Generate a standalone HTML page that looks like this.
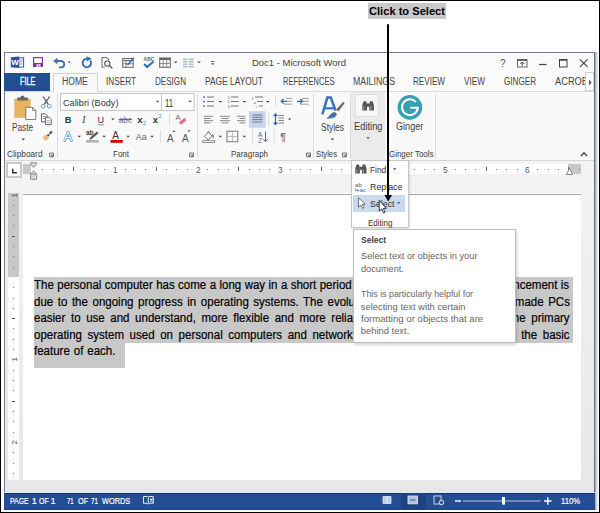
<!DOCTYPE html>
<html><head><meta charset="utf-8"><style>
*{margin:0;padding:0;box-sizing:border-box}
html,body{width:600px;height:513px;overflow:hidden;background:#fff;position:relative;font-family:'Liberation Sans',sans-serif}
.a{position:absolute}
.t{position:absolute;white-space:pre;font-family:'Liberation Sans',sans-serif;line-height:normal;transform-origin:0 0;z-index:5}
.frame{left:0;top:0;width:600px;height:513px;border:1px solid #000;z-index:20;pointer-events:none}
.win{left:4px;top:52px;width:591px;height:458px;background:#fafafa;border:1px solid #6f7f96;border-right:1px solid #5f7190}
.wr{left:595px;top:52px;width:3px;height:458px;background:linear-gradient(90deg,#97a4b8,#cfd5de 50%,#eef0f3)}
.docbg{left:5px;top:161px;width:589px;height:332px;background:linear-gradient(#f4f4f4,#f1f1f1 15%,#e7e7e7 100%)}
.ribbon{left:5px;top:91px;width:589px;height:70px;background:#f9f9f9;border-top:1px solid #dadada;border-bottom:1px solid #d6d6d6}
.filetab{left:4px;top:73px;width:46px;height:18px;background:#22508f}
.hometab{left:53px;top:73px;width:45px;height:19px;background:#f9f9f9;border:1px solid #d4d4d4;border-bottom:none;z-index:2}
.sep{width:1px;background:#dcdcdc}
.status{left:4px;top:493px;width:591px;height:17px;background:#234e93;border-top:1px solid #15356b;border-bottom:1px solid #1f4584;box-shadow:0 -1px 0 #dfe7f3}
.page{left:23px;top:194px;width:558px;height:286px;background:#fff;border-top:1px solid #a8a8a8;box-shadow:0 -1px 0 #fff}
.vr{left:8px;top:193px;width:11px;height:287px;background:#fff}
.vrg{left:8px;top:193px;width:11px;height:84px;background:#c8c8c8}
.hr{left:23px;top:164px;width:558px;height:10px;background:#fff}
.hrg{top:164px;height:10px;background:#c8c8c8}
.doc{left:34px;top:277px;width:539px;z-index:1;font-family:'Liberation Sans',sans-serif;color:#1b1b1b}
.ln{position:absolute;left:0;height:16.3px;background:#c8c8c8;white-space:nowrap}
.dd{left:351px;top:160px;width:58px;height:68px;background:#fff;border:1px solid #c6c6c6;z-index:3;box-shadow:1px 1px 2px rgba(0,0,0,.12)}
.tip{left:353px;top:229px;width:163px;height:114px;background:#fff;border:1px solid #bdbdbd;z-index:3;box-shadow:1px 2px 3px rgba(0,0,0,.18)}
.arrow{z-index:10}

.dw{position:absolute;white-space:pre;font-size:12.5px;line-height:normal;color:#000;-webkit-text-stroke:0.2px #000;transform:scaleX(0.92);transform-origin:0 0;z-index:2}

</style></head><body>
<div class="a frame"></div>
<div class="a" style="left:368px;top:3px;width:78px;height:16px;background:#c9c9c9"></div>
<div class="a win"></div><div class="a wr"></div>
<div class="a docbg"></div>
<div class="a ribbon"></div>
<div class="a filetab"></div>
<div class="a hometab"></div>
<!-- ribbon separators -->
<div class="a sep" style="left:57px;top:94px;height:64px"></div>
<div class="a sep" style="left:197px;top:94px;height:64px"></div>
<div class="a sep" style="left:313px;top:94px;height:64px"></div>
<div class="a sep" style="left:350px;top:94px;height:64px"></div>
<div class="a sep" style="left:435px;top:94px;height:64px"></div>
<!-- editing group pressed -->
<div class="a" style="left:351px;top:92px;width:34px;height:68px;background:#ebebeb"></div>
<div class="a" style="left:355px;top:94px;width:24px;height:23px;background:#f7f7f7;border:1px solid #dedede"></div>
<!-- ruler -->
<div class="a" style="left:6px;top:161.5px;width:16px;height:16.2px;background:#fff;border:2px solid #c9c9c9"></div>
<div class="a hr"></div>
<div class="a hrg" style="left:23px;width:8px"></div>
<div class="a hrg" style="left:568px;width:13px"></div>
<div class="a vr"></div>
<div class="a vrg"></div>
<div class="a page"></div>
<div class="a status"></div>
<div class="a status" style="left:401px;width:25px;background:#1e4382;border:none;height:16px"></div>
<div class="a dd">
  <div class="a" style="left:1px;top:34px;width:52px;height:17px;background:#c9d9ee"></div>
</div>
<div class="a tip"></div>
<div class='a' style='left:42.31px;top:169px;width:1px;height:1px;background:#777'></div><div class='a' style='left:52.62px;top:169px;width:1px;height:1px;background:#777'></div><div class='a' style='left:62.94px;top:169px;width:1px;height:1px;background:#777'></div><div class='a' style='left:73.25px;top:167px;width:1px;height:4px;background:#666'></div><div class='a' style='left:83.56px;top:169px;width:1px;height:1px;background:#777'></div><div class='a' style='left:93.88px;top:169px;width:1px;height:1px;background:#777'></div><div class='a' style='left:104.19px;top:169px;width:1px;height:1px;background:#777'></div><div class='a' style='left:124.81px;top:169px;width:1px;height:1px;background:#777'></div><div class='a' style='left:135.12px;top:169px;width:1px;height:1px;background:#777'></div><div class='a' style='left:145.44px;top:169px;width:1px;height:1px;background:#777'></div><div class='a' style='left:155.75px;top:167px;width:1px;height:4px;background:#666'></div><div class='a' style='left:166.06px;top:169px;width:1px;height:1px;background:#777'></div><div class='a' style='left:176.38px;top:169px;width:1px;height:1px;background:#777'></div><div class='a' style='left:186.69px;top:169px;width:1px;height:1px;background:#777'></div><div class='a' style='left:207.31px;top:169px;width:1px;height:1px;background:#777'></div><div class='a' style='left:217.62px;top:169px;width:1px;height:1px;background:#777'></div><div class='a' style='left:227.94px;top:169px;width:1px;height:1px;background:#777'></div><div class='a' style='left:238.25px;top:167px;width:1px;height:4px;background:#666'></div><div class='a' style='left:248.56px;top:169px;width:1px;height:1px;background:#777'></div><div class='a' style='left:258.88px;top:169px;width:1px;height:1px;background:#777'></div><div class='a' style='left:269.19px;top:169px;width:1px;height:1px;background:#777'></div><div class='a' style='left:289.81px;top:169px;width:1px;height:1px;background:#777'></div><div class='a' style='left:300.12px;top:169px;width:1px;height:1px;background:#777'></div><div class='a' style='left:310.44px;top:169px;width:1px;height:1px;background:#777'></div><div class='a' style='left:320.75px;top:167px;width:1px;height:4px;background:#666'></div><div class='a' style='left:331.06px;top:169px;width:1px;height:1px;background:#777'></div><div class='a' style='left:341.38px;top:169px;width:1px;height:1px;background:#777'></div><div class='a' style='left:351.69px;top:169px;width:1px;height:1px;background:#777'></div><div class='a' style='left:372.31px;top:169px;width:1px;height:1px;background:#777'></div><div class='a' style='left:382.62px;top:169px;width:1px;height:1px;background:#777'></div><div class='a' style='left:392.94px;top:169px;width:1px;height:1px;background:#777'></div><div class='a' style='left:403.25px;top:167px;width:1px;height:4px;background:#666'></div><div class='a' style='left:413.56px;top:169px;width:1px;height:1px;background:#777'></div><div class='a' style='left:423.88px;top:169px;width:1px;height:1px;background:#777'></div><div class='a' style='left:434.19px;top:169px;width:1px;height:1px;background:#777'></div><div class='a' style='left:454.81px;top:169px;width:1px;height:1px;background:#777'></div><div class='a' style='left:465.12px;top:169px;width:1px;height:1px;background:#777'></div><div class='a' style='left:475.44px;top:169px;width:1px;height:1px;background:#777'></div><div class='a' style='left:485.75px;top:167px;width:1px;height:4px;background:#666'></div><div class='a' style='left:496.06px;top:169px;width:1px;height:1px;background:#777'></div><div class='a' style='left:506.38px;top:169px;width:1px;height:1px;background:#777'></div><div class='a' style='left:516.69px;top:169px;width:1px;height:1px;background:#777'></div><div class='a' style='left:537.31px;top:169px;width:1px;height:1px;background:#777'></div><div class='a' style='left:547.62px;top:169px;width:1px;height:1px;background:#777'></div><div class='a' style='left:557.94px;top:169px;width:1px;height:1px;background:#777'></div><div class='a' style='left:568.25px;top:167px;width:1px;height:4px;background:#666'></div><div class='a' style='left:578.56px;top:169px;width:1px;height:1px;background:#777'></div><div class='a' style='left:13px;top:204.71px;width:1px;height:1px;background:#777'></div><div class='a' style='left:13px;top:215.02px;width:1px;height:1px;background:#777'></div><div class='a' style='left:13px;top:225.34px;width:1px;height:1px;background:#777'></div><div class='a' style='left:12px;top:235.65px;width:3px;height:1px;background:#555'></div><div class='a' style='left:13px;top:245.96px;width:1px;height:1px;background:#777'></div><div class='a' style='left:13px;top:256.27px;width:1px;height:1px;background:#777'></div><div class='a' style='left:13px;top:266.59px;width:1px;height:1px;background:#777'></div><div class='a' style='left:13px;top:287.21px;width:1px;height:1px;background:#777'></div><div class='a' style='left:13px;top:297.52px;width:1px;height:1px;background:#777'></div><div class='a' style='left:13px;top:307.84px;width:1px;height:1px;background:#777'></div><div class='a' style='left:12px;top:318.15px;width:3px;height:1px;background:#555'></div><div class='a' style='left:13px;top:328.46px;width:1px;height:1px;background:#777'></div><div class='a' style='left:13px;top:338.77px;width:1px;height:1px;background:#777'></div><div class='a' style='left:13px;top:349.09px;width:1px;height:1px;background:#777'></div><div class='a' style='left:13px;top:369.71px;width:1px;height:1px;background:#777'></div><div class='a' style='left:13px;top:380.02px;width:1px;height:1px;background:#777'></div><div class='a' style='left:13px;top:390.34px;width:1px;height:1px;background:#777'></div><div class='a' style='left:12px;top:400.65px;width:3px;height:1px;background:#555'></div><div class='a' style='left:13px;top:410.96px;width:1px;height:1px;background:#777'></div><div class='a' style='left:13px;top:421.27px;width:1px;height:1px;background:#777'></div><div class='a' style='left:13px;top:431.59px;width:1px;height:1px;background:#777'></div><div class='a' style='left:13px;top:452.21px;width:1px;height:1px;background:#777'></div><div class='a' style='left:13px;top:462.52px;width:1px;height:1px;background:#777'></div><div class='a' style='left:13px;top:472.84px;width:1px;height:1px;background:#777'></div>
<div class="a" style="left:34px;top:277px;width:539px;height:65.5px;background:#c8c8c8;z-index:1"></div>
<div class="a" style="left:34px;top:342.5px;width:91px;height:25px;background:#c8c8c8;z-index:1"></div>
<span class='dw' style='left:34.20px;top:278.19px;word-spacing:0.25px'>The personal computer has come a long way in a short period of time. A large part of</span><span class='dw' style='left:467.39px;top:278.19px;word-spacing:0.25px'>this advancement is</span><span class='dw' style='left:34.20px;top:294.69px;word-spacing:1.5px'>due to the ongoing progress in operating systems. The evolution of operating</span><span class='dw' style='left:444.57px;top:294.69px;word-spacing:1.5px'>systems has made PCs</span><span class='dw' style='left:34.20px;top:311.09px;word-spacing:2.63px'>easier to use and understand, more flexible and more reliable. This tutorial</span><span class='dw' style='left:461.89px;top:311.09px;word-spacing:2.63px'>looks at the primary</span><span class='dw' style='left:34.20px;top:327.79px;word-spacing:2.64px'>operating system used on personal computers and networks, and</span><span class='dw' style='left:429.89px;top:327.79px;word-spacing:2.64px'>briefly examines the basic</span><span class='dw' style='left:34.20px;top:344.49px;word-spacing:0.8px'>feature of each.</span>
<svg class="a" style="left:0;top:0;z-index:4" width="600" height="513" font-family="Liberation Sans">
<!-- ===== title bar quick access ===== -->
<!-- word icon -->
<rect x="18" y="57.8" width="5.6" height="9.2" fill="#fff" stroke="#2b579a" stroke-width="1"/>
<line x1="19" y1="60" x2="22.6" y2="60" stroke="#7d9cc8" stroke-width=".9"/><line x1="19" y1="62" x2="22.6" y2="62" stroke="#7d9cc8" stroke-width=".9"/><line x1="19" y1="64" x2="22.6" y2="64" stroke="#7d9cc8" stroke-width=".9"/>
<polygon points="10.8,57.3 19.2,56.5 19.2,68 10.8,67.2" fill="#2b579a"/>
<text x="11.3" y="65" font-size="7.2" font-weight="700" fill="#fff" textLength="7.6" lengthAdjust="spacingAndGlyphs">W</text>
<!-- save -->
<rect x="33" y="57" width="10" height="10" fill="#80379c"/>
<rect x="34.2" y="58.2" width="7.6" height="4.8" fill="#fff"/>
<rect x="36.6" y="64.3" width="3.8" height="2.7" fill="#fff"/>
<rect x="37.8" y="65" width="1.4" height="1.6" fill="#80379c"/>
<!-- undo -->
<path d="M55.5 61 H61 A3.2 3.2 0 0 1 61 67.4 H59" fill="none" stroke="#3a6fb5" stroke-width="1.8"/>
<polygon points="53.2,61 57.5,57.7 57.5,64.3" fill="#3a6fb5"/>
<polygon points="67.5,61.5 71,61.5 69.25,63.3" fill="#555"/>
<!-- redo circular -->
<path d="M90.3 60.6 A4.2 4.2 0 1 1 86.8 58.8" fill="none" stroke="#2f6db5" stroke-width="1.9"/>
<polygon points="86.6,56.3 91.8,58.8 86.6,61.4" fill="#2f6db5"/>
<!-- print preview -->
<path d="M108.8 60.5 V59.8 L106.5 57.5 H102 V67.3 H104.8" fill="none" stroke="#777" stroke-width="1.1"/>
<circle cx="107.3" cy="63.6" r="2.6" fill="none" stroke="#555" stroke-width="1.1"/>
<line x1="109.2" y1="65.5" x2="112.3" y2="68.3" stroke="#555" stroke-width="1.3"/>
<!-- track/edit -->
<rect x="122.7" y="58.5" width="10.5" height="8.8" fill="none" stroke="#666" stroke-width="1"/>
<line x1="122.7" y1="60.5" x2="133.2" y2="60.5" stroke="#666"/><line x1="126" y1="60.5" x2="126" y2="67.3" stroke="#666" stroke-width=".8"/><line x1="122.7" y1="63.8" x2="133.2" y2="63.8" stroke="#666" stroke-width=".8"/>
<line x1="127.5" y1="65" x2="133.8" y2="57.8" stroke="#3a74b8" stroke-width="1.8"/>
<!-- ABC check -->
<text x="143.6" y="61.3" font-size="5" font-weight="700" fill="#666">ABC</text>
<path d="M144.2 63.8 L147 67 L153.5 61.5" fill="none" stroke="#2f6db5" stroke-width="2"/>
<!-- table -->
<rect x="159.7" y="58" width="10.6" height="9.3" fill="none" stroke="#666" stroke-width="1"/>
<rect x="159.7" y="58" width="10.6" height="2" fill="#666"/>
<line x1="163.2" y1="60" x2="163.2" y2="67.3" stroke="#777" stroke-width=".8"/><line x1="166.7" y1="60" x2="166.7" y2="67.3" stroke="#777" stroke-width=".8"/><line x1="159.7" y1="63.5" x2="170.3" y2="63.5" stroke="#777" stroke-width=".8"/>
<polygon points="174,61.5 177.5,61.5 175.75,63.3" fill="#444"/>
<!-- columns -->
<g fill="#9fb3cf"><rect x="183" y="58.5" width="4.6" height="1.3"/><rect x="189" y="58.5" width="4.6" height="1.3"/><rect x="183" y="61" width="4.6" height="1.3"/><rect x="189" y="61" width="4.6" height="1.3"/><rect x="183" y="63.5" width="4.6" height="1.3"/><rect x="189" y="63.5" width="4.6" height="1.3"/><rect x="183" y="66" width="4.6" height="1.3"/><rect x="189" y="66" width="4.6" height="1.3"/></g>
<polygon points="197.3,61.5 200.8,61.5 199,63.3" fill="#444"/>
<!-- customize -->
<rect x="211" y="61" width="3.5" height="0.9" fill="#555"/><polygon points="211,63.2 214.5,63.2 212.75,65" fill="#555"/>
<!-- window controls -->
<text x="500" y="67" font-size="10" fill="#555">?</text>
<rect x="517.5" y="59.5" width="9.5" height="7.5" fill="none" stroke="#666" stroke-width="1"/>
<rect x="517.5" y="59.5" width="9.5" height="1.5" fill="#666"/>
<path d="M522.2 66 V62 M520.2 64 L522.2 62 L524.2 64" fill="none" stroke="#555" stroke-width="1"/>
<line x1="539" y1="64.5" x2="546.5" y2="64.5" stroke="#444" stroke-width="1.2"/>
<rect x="559.5" y="59.5" width="7.5" height="7.5" fill="none" stroke="#444" stroke-width="1"/>
<line x1="559.5" y1="60.2" x2="567" y2="60.2" stroke="#444" stroke-width="1"/>
<path d="M580 59.3 L587.6 66.9 M587.6 59.3 L580 66.9" stroke="#444" stroke-width="1.2"/>
<!-- ===== Clipboard group ===== -->
<rect x="14.3" y="98.8" width="16.3" height="19" fill="#e8b35e"/>
<path d="M17.3 97.5 H20.5 A2 2 0 0 1 24.5 97.5 H27.8 V100.6 H17.3 Z" fill="#666"/>
<path d="M25.8 107.3 H32.5 L35.8 110.6 V119.4 H25.8 Z" fill="#fff" stroke="#777" stroke-width="1"/>
<path d="M32.5 107.3 V110.6 H35.8" fill="none" stroke="#777" stroke-width=".8"/>
<polygon points="21.5,138.6 25,138.6 23.25,140.4" fill="#444"/>
<!-- scissors -->
<path d="M43 96.5 L48.3 104.3 M49.6 96.5 L44.3 104.3" stroke="#555" stroke-width="1.2"/>
<circle cx="43.3" cy="106.2" r="1.9" fill="none" stroke="#7094c2" stroke-width="1"/>
<circle cx="49.3" cy="106.2" r="1.9" fill="none" stroke="#7094c2" stroke-width="1"/>
<!-- copy -->
<path d="M41.5 113.8 H45.5 L47.2 115.5 V121.8 H41.5 Z" fill="#fff" stroke="#666" stroke-width="1"/>
<line x1="42.8" y1="116.5" x2="45.5" y2="116.5" stroke="#777" stroke-width=".8"/><line x1="42.8" y1="118.5" x2="45.5" y2="118.5" stroke="#777" stroke-width=".8"/>
<path d="M45.4 117.3 H49.3 L51.3 119.3 V124.6 H45.4 Z" fill="#fff" stroke="#666" stroke-width="1"/>
<line x1="46.6" y1="120.6" x2="50.1" y2="120.6" stroke="#8aa0bd" stroke-width=".8"/><line x1="46.6" y1="122.5" x2="50.1" y2="122.5" stroke="#8aa0bd" stroke-width=".8"/>
<!-- format painter -->
<polygon points="42.3,137.6 45.8,134.2 49.3,137.7 45.8,141" fill="#e6bd78"/>
<line x1="47.5" y1="135.8" x2="49" y2="134.4" stroke="#444" stroke-width="2"/>
<line x1="49.6" y1="133.8" x2="52" y2="131.6" stroke="#444" stroke-width="2"/>

<!-- ===== Font group ===== -->
<rect x="60.5" y="93.5" width="101" height="17" fill="#fff" stroke="#c6c6c6" stroke-width="1"/>
<rect x="161.5" y="93.5" width="32.5" height="17" fill="#fff" stroke="#c6c6c6" stroke-width="1"/>
<polygon points="155.8,100.8 159.3,100.8 157.55,102.6" fill="#444"/>
<polygon points="188.3,100.8 191.8,100.8 190.05,102.6" fill="#444"/>
<text x="64.8" y="122.8" font-size="9.3" font-weight="700" fill="#333">B</text>
<text x="82.3" y="122.8" font-size="9.5" font-style="italic" font-family="Liberation Serif" fill="#333">I</text>
<text x="97.5" y="122.8" font-size="9" fill="#333">U</text>
<line x1="97.5" y1="124.8" x2="104" y2="124.8" stroke="#888" stroke-width=".9"/>
<polygon points="111.2,118.5 114.7,118.5 112.95,120.3" fill="#444"/>
<text x="118.8" y="122.6" font-size="8.2" fill="#777" textLength="13">abc</text>
<line x1="118.5" y1="119.6" x2="132" y2="119.6" stroke="#555" stroke-width=".9"/>
<text x="137.3" y="122.8" font-size="9.5" font-weight="700" fill="#333">x</text><text x="143" y="125" font-size="5.5" fill="#4a82c0">2</text>
<text x="152.8" y="122.8" font-size="9.5" font-weight="700" fill="#333">x</text><text x="158.6" y="117.5" font-size="5.5" fill="#4a82c0">2</text>
<line x1="169.5" y1="113" x2="169.5" y2="125" stroke="#dcdcdc"/>
<text x="175.5" y="119.5" font-size="7.5" fill="#666">A</text>
<line x1="180" y1="123.5" x2="185.5" y2="119" stroke="#e26d7f" stroke-width="3"/>
<!-- row 3 -->
<text x="64" y="141.3" font-size="12" fill="#fff" stroke="#5b93d0" stroke-width="1.4" stroke-linejoin="round">A</text><text x="64" y="141.3" font-size="12" fill="#fff">A</text>
<polygon points="77.5,135.8 81,135.8 79.25,137.6" fill="#444"/>
<text x="86" y="134.9" font-size="6.6" fill="#444" stroke="#444" stroke-width=".25">ab</text>
<line x1="91" y1="138.3" x2="97.6" y2="132.4" stroke="#555" stroke-width="2.2"/><polygon points="89.2,139.7 90.2,137.3 91.8,138.9" fill="#555"/>
<rect x="86" y="140" width="12.8" height="2.7" fill="#b5b5b5"/>
<polygon points="102.3,135.8 105.8,135.8 104.05,137.6" fill="#444"/>
<text x="112.2" y="138.8" font-size="10" fill="#333">A</text>
<rect x="110.5" y="140" width="12.3" height="2.8" fill="#e00000"/>
<polygon points="126.3,135.8 129.8,135.8 128.05,137.6" fill="#444"/>
<text x="135.8" y="140" font-size="9" fill="#666">Aa</text>
<polygon points="150.3,135.8 153.8,135.8 152.05,137.6" fill="#444"/>
<line x1="160.5" y1="130" x2="160.5" y2="143" stroke="#dcdcdc"/>
<text x="167" y="141.5" font-size="10" fill="#555">A</text><polygon points="172.5,132 175.5,132 174,130.3" fill="#444"/>
<text x="182" y="141.5" font-size="10" fill="#555">A</text><polygon points="187.5,130.3 190.5,130.3 189,132" fill="#444"/>
<!-- dialog launchers -->
<g fill="none" stroke="#666" stroke-width=".9"><path d="M49.5 156.8 V153 H53.5 V156.8 Z M50.7 154.2 L52.7 156.2 M52.7 154.6 V156.2 H51.1"/><path d="M189.5 156.8 V153 H193.5 V156.8 Z M190.7 154.2 L192.7 156.2 M192.7 154.6 V156.2 H191.1"/><path d="M306.5 156.8 V153 H310.5 V156.8 Z M307.7 154.2 L309.7 156.2 M309.7 154.6 V156.2 H308.1"/><path d="M342.5 156.8 V153 H346.5 V156.8 Z M343.7 154.2 L345.7 156.2 M345.7 154.6 V156.2 H344.1"/></g>

<!-- ===== Paragraph group ===== -->
<g fill="#3a6fb5"><rect x="203.3" y="96.3" width="1.6" height="1.6"/><rect x="203.3" y="100.8" width="1.6" height="1.6"/><rect x="203.3" y="105.2" width="1.6" height="1.6"/></g>
<g stroke="#777" stroke-width="1"><line x1="207" y1="97" x2="214" y2="97"/><line x1="207" y1="101.5" x2="214" y2="101.5"/><line x1="207" y1="106" x2="214" y2="106"/></g>
<polygon points="218.6,101 222.1,101 220.35,102.8" fill="#444"/>
<g fill="#3a6fb5" font-size="4.2"><text x="227.5" y="98.8">1</text><text x="227.5" y="103.3">2</text><text x="227.5" y="107.8">3</text></g>
<g stroke="#777" stroke-width="1"><line x1="231" y1="97" x2="238.5" y2="97"/><line x1="231" y1="101.5" x2="238.5" y2="101.5"/><line x1="231" y1="106" x2="238.5" y2="106"/></g>
<polygon points="242.6,101 246.1,101 244.35,102.8" fill="#444"/>
<g fill="#3a6fb5" font-size="4.2"><text x="251.5" y="99.5">1</text><text x="253.5" y="103.5">a</text></g><text x="256" y="107.5" font-size="4.2" fill="#777">i</text>
<g stroke="#777" stroke-width="1"><line x1="255" y1="97" x2="263" y2="97"/><line x1="257" y1="101.5" x2="263" y2="101.5"/><line x1="259" y1="106" x2="263" y2="106"/></g>
<polygon points="266,101 269.5,101 267.75,102.8" fill="#444"/>
<line x1="275.5" y1="95" x2="275.5" y2="107" stroke="#dcdcdc"/>
<g stroke="#aaa" stroke-width="1.2"><line x1="286" y1="98.5" x2="292.3" y2="98.5"/><line x1="286" y1="101.3" x2="292.3" y2="101.3"/><line x1="284" y1="104.2" x2="292.3" y2="104.2"/><line x1="302" y1="98.5" x2="308.8" y2="98.5"/><line x1="302" y1="101.3" x2="308.8" y2="101.3"/><line x1="300" y1="104.2" x2="308.8" y2="104.2"/></g>
<path d="M281.3 101.3 H287 M283.5 99 L281.3 101.3 L283.5 103.6" fill="none" stroke="#3a6fb5" stroke-width="1.3"/>
<path d="M297 101.3 H302.5 M300.2 99 L302.5 101.3 L300.2 103.6" fill="none" stroke="#3a6fb5" stroke-width="1.3"/>
<!-- align row -->
<g stroke="#777" stroke-width=".9">
<line x1="204" y1="116.3" x2="213" y2="116.3"/><line x1="204" y1="118.5" x2="210.5" y2="118.5"/><line x1="204" y1="120.7" x2="213" y2="120.7"/><line x1="204" y1="122.9" x2="210.5" y2="122.9"/>
<line x1="220" y1="116.3" x2="230" y2="116.3"/><line x1="221.5" y1="118.5" x2="228.5" y2="118.5"/><line x1="220" y1="120.7" x2="230" y2="120.7"/><line x1="221.5" y1="122.9" x2="228.5" y2="122.9"/>
<line x1="237" y1="116.3" x2="245.5" y2="116.3"/><line x1="239.5" y1="118.5" x2="245.5" y2="118.5"/><line x1="237" y1="120.7" x2="245.5" y2="120.7"/><line x1="239.5" y1="122.9" x2="245.5" y2="122.9"/>
</g>
<rect x="249" y="111.2" width="16.6" height="16.5" fill="#c5d6ec"/>
<g stroke="#6d7a8a" stroke-width="1"><line x1="252.3" y1="115" x2="262.4" y2="115"/><line x1="252.3" y1="117.3" x2="262.4" y2="117.3"/><line x1="252.3" y1="119.6" x2="262.4" y2="119.6"/><line x1="252.3" y1="122" x2="262.4" y2="122"/></g>
<line x1="268.5" y1="112" x2="268.5" y2="126" stroke="#dcdcdc"/>
<path d="M275.5 114 V124.5 M273.6 116 L275.5 114 L277.4 116 M273.6 122.5 L275.5 124.5 L277.4 122.5" fill="none" stroke="#3a6fb5" stroke-width="1.3"/>
<g stroke="#777" stroke-width=".9"><line x1="278.5" y1="115.5" x2="284" y2="115.5"/><line x1="278.5" y1="118" x2="284" y2="118"/><line x1="278.5" y1="120.5" x2="284" y2="120.5"/><line x1="278.5" y1="123" x2="284" y2="123"/></g>
<polygon points="287.8,118.5 291.3,118.5 289.55,120.3" fill="#444"/>
<!-- row3 -->
<path d="M204.3 136.3 L208.3 132.3 L212.1 136.1 L208.1 140 Z" fill="#fff" stroke="#6a6a6a" stroke-width=".9"/>
<path d="M207.4 133.2 C207 131 209.8 130.6 209.8 132.8 V134" fill="none" stroke="#777" stroke-width=".8"/>
<path d="M212.2 133.6 C214.4 135.2 214.2 137.6 212.8 138.8 C212.3 137 212.9 135.5 212.2 133.6 Z" fill="#2f6db5"/>
<rect x="202.7" y="140.7" width="12" height="1.9" fill="#fff" stroke="#777" stroke-width=".8"/>
<polygon points="218.6,135.8 222.1,135.8 220.35,137.6" fill="#444"/>
<rect x="227" y="131.2" width="10.8" height="10.5" fill="none" stroke="#777" stroke-width="1"/>
<line x1="232.4" y1="131.2" x2="232.4" y2="141.7" stroke="#aaa" stroke-width=".8"/><line x1="227" y1="136.45" x2="237.8" y2="136.45" stroke="#aaa" stroke-width=".8"/>
<polygon points="242.6,135.8 246.1,135.8 244.35,137.6" fill="#444"/>
<line x1="252.5" y1="129" x2="252.5" y2="143" stroke="#dcdcdc"/>
<text x="258" y="136.5" font-size="6.5" fill="#3a6fb5">A</text><text x="258.3" y="142.5" font-size="6.5" fill="#8e5ba8">Z</text>
<path d="M265.5 131.5 V141.5 M263.3 139.2 L265.5 141.5 L267.7 139.2" fill="none" stroke="#666" stroke-width="1"/>
<line x1="274.3" y1="129" x2="274.3" y2="143" stroke="#dcdcdc"/>
<text x="280.3" y="140.5" font-size="10" font-weight="700" fill="#777">¶</text>

<!-- ===== Styles group ===== -->
<path d="M322.3 114.3 L327.4 97.6 H330.8 L335.5 110.5" fill="none" stroke="#3a72b8" stroke-width="2.5" stroke-linejoin="miter"/>
<line x1="325" y1="108.3" x2="333.8" y2="108.3" stroke="#3a72b8" stroke-width="2.2"/>
<polygon points="343.2,101.8 344.6,103.3 338.4,111.6 336.2,109.6" fill="#6b6b6b"/>
<path d="M327 118.4 L331.6 113.6 C333.5 111.8 336.6 112.3 336.4 114.6 C336.2 117 333 118.3 327 118.4 Z" fill="#3a72b8" stroke="#777" stroke-width=".7"/>
<polygon points="330.6,138.6 334.1,138.6 332.35,140.4" fill="#444"/>

<!-- ===== Editing / Ginger ===== -->
<polygon points="362.31,110.39 362.31,105.29 363.63,101.21 366.28,101.21 367.00,105.29 367.00,110.39" fill="#555"/><polygon points="373.93,110.39 373.93,105.29 372.61,101.21 369.96,101.21 369.24,105.29 369.24,110.39" fill="#555"/><rect x="366.59" y="103.46" width="3.06" height="3.26" fill="#555"/><rect x="363.33" y="106.21" width="1.22" height="3.57" fill="#999"/><rect x="370.26" y="106.21" width="1.22" height="3.57" fill="#999"/>
<polygon points="366.3,137.2 369.8,137.2 368.05,139" fill="#444"/>
<circle cx="409.9" cy="107.4" r="12.3" fill="#35a0b1"/>
<path d="M415.8 101.9 A7.9 7.9 0 1 0 417.8 107.8 H410.2" fill="none" stroke="#fff" stroke-width="2"/>
<!-- collapse caret -->
<path d="M581 156 L584 152.8 L587 156" fill="none" stroke="#444" stroke-width="1.3"/>

<!-- ===== dropdown icons ===== -->
<polygon points="355.29,173.41 355.29,168.51 356.57,164.59 359.12,164.59 359.80,168.51 359.80,173.41" fill="#555"/><polygon points="366.47,173.41 366.47,168.51 365.19,164.59 362.64,164.59 361.96,168.51 361.96,173.41" fill="#555"/><rect x="359.41" y="166.74" width="2.94" height="3.14" fill="#555"/><rect x="356.27" y="169.39" width="1.18" height="3.43" fill="#999"/><rect x="362.94" y="169.39" width="1.18" height="3.43" fill="#999"/>
<polygon points="393,168.3 396.5,168.3 394.75,170.1" fill="#444"/>
<text x="355" y="186.5" font-size="6.2" fill="#555">ab</text>
<text x="359.5" y="192" font-size="6.2" fill="#3a6fb5">ac</text>
<path d="M355.5 188.5 V190.5 H358.8 M357.5 189.3 L358.8 190.5 L357.5 191.7" fill="none" stroke="#3a6fb5" stroke-width=".8"/>
<path d="M358.5 197.8 V207.2 L360.8 205 L362.6 208.3 L364 207.6 L362.3 204.4 H365.3 Z" fill="#fff" stroke="#666" stroke-width=".9"/>
<polygon points="397,202.3 400.5,202.3 398.75,204.1" fill="#444"/>
<!-- ===== ruler parts ===== -->
<path d="M12.8 168.8 V172.8 H16.9" fill="none" stroke="#333" stroke-width="1.5"/>
<polygon points="30.6,162.8 36.6,162.8 36.6,164 33.6,167.6 30.6,164" fill="#dadada" stroke="#888" stroke-width=".9" stroke-linejoin="round"/>
<polygon points="33.6,170.6 36.6,174.2 36.6,179.3 30.6,179.3 30.6,174.2" fill="#dadada" stroke="#888" stroke-width=".9" stroke-linejoin="round"/>
<line x1="30.6" y1="174.2" x2="36.6" y2="174.2" stroke="#888" stroke-width=".9"/>
<polygon points="569.5,168.2 566.3,174.5 572.7,174.5" fill="#fff" stroke="#777" stroke-width=".9"/>
<!-- vertical ruler "1" marks -->
<text x="0" y="0" font-size="8" fill="#444" transform="translate(17,197.6) rotate(-90)">1</text>
<text x="0" y="0" font-size="8" fill="#444" transform="translate(17,361.6) rotate(-90)">1</text>
<text x="0" y="0" font-size="8" fill="#444" transform="translate(17,444.6) rotate(-90)">2</text>

<!-- ===== status bar icons ===== -->
<path d="M143.5 496.5 H147.5 L148.3 497.2 L149.1 496.5 H153.3 V503.3 H149.1 L148.3 504 L147.5 503.3 H143.5 Z M148.3 497.2 V503.5" fill="none" stroke="#dfe8f6" stroke-width="1"/>
<path d="M150.2 498.6 L152.6 501.6 M152.6 498.6 L150.2 501.6" stroke="#fff" stroke-width="1.1"/>
<path d="M383 496.5 H387 V503.5 H383 Z M387 496.5 H391 V503.5 H387 Z" fill="#bcd0ec" stroke="#dfe8f5" stroke-width=".8"/>
<rect x="408" y="496" width="9.5" height="7.8" fill="#aec3e0" stroke="#e5ecf6" stroke-width=".8"/><line x1="410" y1="500" x2="415.5" y2="500" stroke="#3c5f96"/>
<rect x="434" y="496" width="7" height="8" fill="none" stroke="#dbe5f3" stroke-width=".9"/><circle cx="441.5" cy="502.5" r="2.2" fill="#2b579a" stroke="#fff" stroke-width=".9"/>
<line x1="455" y1="501" x2="461" y2="501" stroke="#fff" stroke-width="1.4"/>
<line x1="463" y1="501" x2="540.5" y2="501" stroke="#b9c9e2" stroke-width="1"/>
<rect x="502" y="497" width="3" height="7.6" fill="#fff"/>
<path d="M544 501 H551.5 M547.75 497.2 V504.8" stroke="#fff" stroke-width="1.5"/>
</svg>

<div class="a" style="left:585px;top:72px;width:9px;height:19px;background:#fff;border:1px solid #d0d0d0;z-index:6"><svg width="9" height="19" style="position:absolute;left:0;top:0"><polygon points="3,6.5 5.7,9.5 3,12.5" fill="#555"/></svg></div>
<svg class="a arrow" style="left:0;top:0" width="600" height="513"><line x1="388" y1="25" x2="388" y2="196" stroke="#000" stroke-width="2" stroke-linecap="round"/><polygon points="384.5,195 392,195 388.2,201.5" fill="#000"/><path d="M379.2 200.3 V211 L381.6 208.9 L383.5 213 L385 212.3 L383.2 208.4 H386.4 Z" fill="#fff" stroke="#222" stroke-width=".9" stroke-linejoin="round"/></svg>

<span id='t0' class='t' style='left:369.00px;top:5.04px;font-size:11px;font-weight:700;color:#000;transform:scaleX(1.0106);'>Click to Select</span><span id='t1' class='t' style='left:252.00px;top:57.43px;font-size:9.8px;font-weight:400;color:#444;transform:scaleX(0.9664);'>Doc1 - Microsoft Word</span><span id='t2' class='t' style='left:19.70px;top:76.15px;font-size:10.0px;font-weight:400;color:#fff;-webkit-text-stroke:.3px #fff;transform:scaleX(0.7337);'>FILE</span><span id='t3' class='t' style='left:61.70px;top:76.15px;font-size:10.0px;font-weight:400;color:#33486e;transform:scaleX(0.8600);'>HOME</span><span id='t4' class='t' style='left:106.00px;top:76.15px;font-size:10.0px;font-weight:400;color:#444;transform:scaleX(0.8219);'>INSERT</span><span id='t5' class='t' style='left:155.00px;top:76.15px;font-size:10.0px;font-weight:400;color:#444;transform:scaleX(0.8085);'>DESIGN</span><span id='t6' class='t' style='left:205.00px;top:76.15px;font-size:10.0px;font-weight:400;color:#444;transform:scaleX(0.8394);'>PAGE LAYOUT</span><span id='t7' class='t' style='left:282.50px;top:76.15px;font-size:10.0px;font-weight:400;color:#444;transform:scaleX(0.7534);'>REFERENCES</span><span id='t8' class='t' style='left:353.00px;top:76.15px;font-size:10.0px;font-weight:400;color:#444;transform:scaleX(0.8787);'>MAILINGS</span><span id='t9' class='t' style='left:413.00px;top:76.15px;font-size:10.0px;font-weight:400;color:#444;transform:scaleX(0.8111);'>REVIEW</span><span id='t10' class='t' style='left:464.00px;top:76.15px;font-size:10.0px;font-weight:400;color:#444;transform:scaleX(0.8215);'>VIEW</span><span id='t11' class='t' style='left:504.00px;top:76.15px;font-size:10.0px;font-weight:400;color:#444;transform:scaleX(0.8111);'>GINGER</span><span id='t12' class='t' style='left:555.00px;top:76.15px;font-size:10.0px;font-weight:400;color:#444;transform:scaleX(0.9279);'>ACROB</span><span id='t13' class='t' style='left:62.50px;top:97.33px;font-size:9.8px;font-weight:400;color:#333;transform:scaleX(0.9352);'>Calibri (Body)</span><span id='t14' class='t' style='left:165.00px;top:96.81px;font-size:10.6px;font-weight:400;color:#333;transform:scaleX(0.7455);'>11</span><span id='t15' class='t' style='left:12.00px;top:121.77px;font-size:10.2px;font-weight:400;color:#3c3c3c;transform:scaleX(0.8058);'>Paste</span><span id='t16' class='t' style='left:321.00px;top:121.59px;font-size:10.4px;font-weight:400;color:#3c3c3c;transform:scaleX(0.8128);'>Styles</span><span id='t17' class='t' style='left:353.70px;top:120.79px;font-size:10.4px;font-weight:400;color:#3c3c3c;transform:scaleX(0.8968);'>Editing</span><span id='t18' class='t' style='left:396.00px;top:121.49px;font-size:10.4px;font-weight:400;color:#3c3c3c;transform:scaleX(0.8754);'>Ginger</span><span id='t19' class='t' style='left:7.00px;top:148.44px;font-size:9.9px;font-weight:400;color:#3c3c3c;transform:scaleX(0.8396);'>Clipboard</span><span id='t20' class='t' style='left:113.00px;top:148.44px;font-size:9.9px;font-weight:400;color:#3c3c3c;transform:scaleX(0.8095);'>Font</span><span id='t21' class='t' style='left:231.00px;top:148.44px;font-size:9.9px;font-weight:400;color:#3c3c3c;transform:scaleX(0.8022);'>Paragraph</span><span id='t22' class='t' style='left:316.00px;top:148.44px;font-size:9.9px;font-weight:400;color:#3c3c3c;transform:scaleX(0.7805);'>Styles</span><span id='t23' class='t' style='left:388.50px;top:148.44px;font-size:9.9px;font-weight:400;color:#3c3c3c;transform:scaleX(0.8052);'>Ginger Tools</span><span id='t24' class='t' style='left:369.60px;top:164.29px;font-size:9.4px;font-weight:400;color:#333;transform:scaleX(0.8877);'>Find</span><span id='t25' class='t' style='left:369.60px;top:181.39px;font-size:9.4px;font-weight:400;color:#333;transform:scaleX(0.9417);'>Replace</span><span id='t26' class='t' style='left:369.60px;top:198.09px;font-size:9.4px;font-weight:400;color:#333;transform:scaleX(0.9400);'>Select</span><span id='t27' class='t' style='left:367.50px;top:216.89px;font-size:9.4px;font-weight:400;color:#333;transform:scaleX(0.8545);'>Editing</span><span id='t28' class='t' style='left:360.80px;top:235.02px;font-size:8.6px;font-weight:700;color:#444;transform:scaleX(0.9949);'>Select</span><span id='t29' class='t' style='left:9.80px;top:495.97px;font-size:9.2px;font-weight:400;color:#fff;-webkit-text-stroke:.2px #fff;transform:scaleX(0.7482);'>PAGE</span><span id='t30' class='t' style='left:31.70px;top:495.97px;font-size:9.2px;font-weight:400;color:#fff;-webkit-text-stroke:.2px #fff;'>1</span><span id='t31' class='t' style='left:38.60px;top:495.97px;font-size:9.2px;font-weight:400;color:#fff;-webkit-text-stroke:.2px #fff;transform:scaleX(0.7599);'>OF</span><span id='t32' class='t' style='left:50.60px;top:495.97px;font-size:9.2px;font-weight:400;color:#fff;-webkit-text-stroke:.2px #fff;'>1</span><span id='t33' class='t' style='left:67.30px;top:495.97px;font-size:9.2px;font-weight:400;color:#fff;-webkit-text-stroke:.2px #fff;transform:scaleX(0.6449);'>71</span><span id='t34' class='t' style='left:78.20px;top:495.97px;font-size:9.2px;font-weight:400;color:#fff;-webkit-text-stroke:.2px #fff;transform:scaleX(0.7990);'>OF</span><span id='t35' class='t' style='left:91.20px;top:495.97px;font-size:9.2px;font-weight:400;color:#fff;-webkit-text-stroke:.2px #fff;transform:scaleX(0.6840);'>71</span><span id='t36' class='t' style='left:102.00px;top:495.97px;font-size:9.2px;font-weight:400;color:#fff;-webkit-text-stroke:.2px #fff;transform:scaleX(0.8007);'>WORDS</span><span id='t37' class='t' style='left:561.00px;top:495.97px;font-size:9.2px;font-weight:400;color:#fff;-webkit-text-stroke:.2px #fff;transform:scaleX(0.8323);'>110%</span><span id='t38' class='t' style='left:112.70px;top:164.81px;font-size:8.5px;font-weight:400;color:#555;transform:scaleX(0.9716);'>1</span><span id='t39' class='t' style='left:195.70px;top:164.81px;font-size:8.5px;font-weight:400;color:#555;transform:scaleX(0.9716);'>2</span><span id='t40' class='t' style='left:278.20px;top:164.81px;font-size:8.5px;font-weight:400;color:#555;transform:scaleX(0.9716);'>3</span><span id='t41' class='t' style='left:443.40px;top:164.81px;font-size:8.5px;font-weight:400;color:#555;transform:scaleX(0.9716);'>5</span><span id='t42' class='t' style='left:525.40px;top:164.81px;font-size:8.5px;font-weight:400;color:#555;transform:scaleX(0.9716);'>6</span><span id='t43' class='t' style='left:360.80px;top:250.49px;font-size:9.4px;font-weight:400;color:#666;transform:scaleX(0.9893);'>Select text or objects in your</span><span id='t44' class='t' style='left:360.80px;top:262.69px;font-size:9.4px;font-weight:400;color:#666;transform:scaleX(0.9799);'>document.</span><span id='t45' class='t' style='left:360.80px;top:288.49px;font-size:9.4px;font-weight:400;color:#666;transform:scaleX(0.9428);'>This is particularly helpful for</span><span id='t46' class='t' style='left:360.80px;top:300.69px;font-size:9.4px;font-weight:400;color:#666;'>selecting text with certain</span><span id='t47' class='t' style='left:360.80px;top:312.99px;font-size:9.4px;font-weight:400;color:#666;transform:scaleX(1.0239);'>formatting or objects that are</span><span id='t48' class='t' style='left:360.80px;top:324.99px;font-size:9.4px;font-weight:400;color:#666;'>behind text.</span>
</body></html>
